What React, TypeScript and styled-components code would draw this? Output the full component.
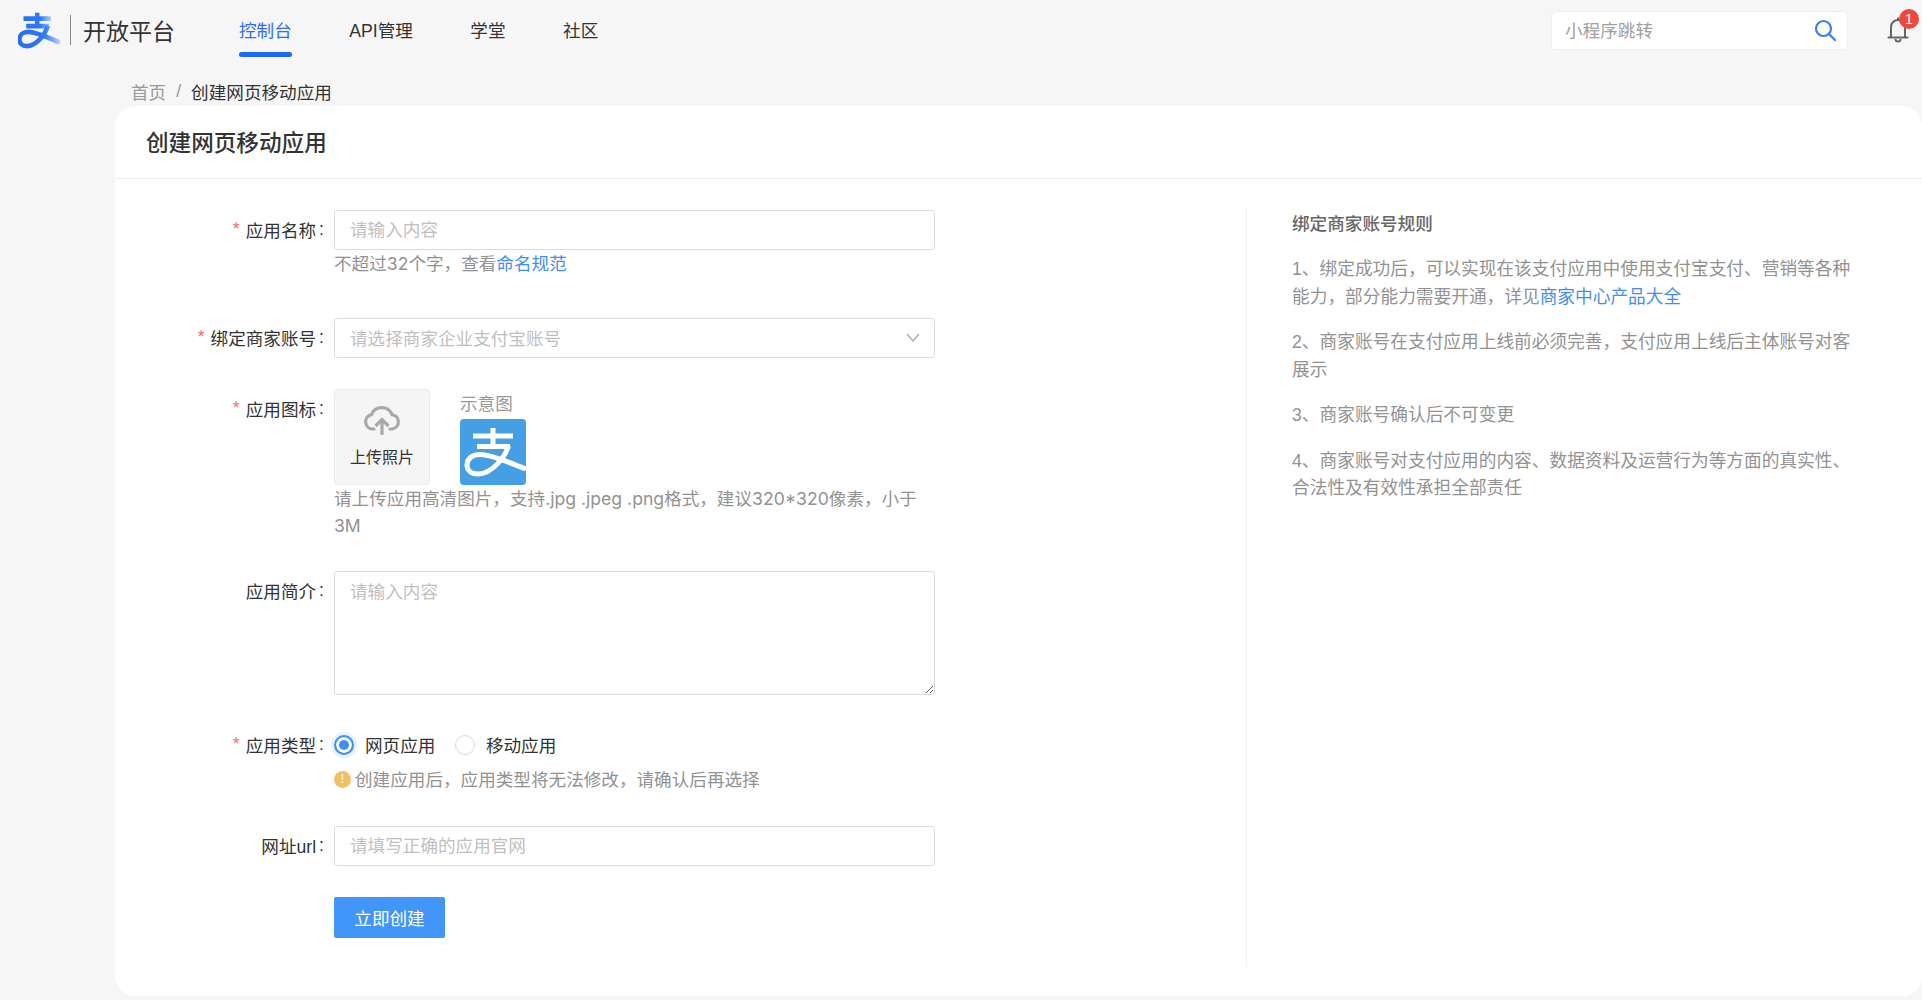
import React from "react";
import styled, { createGlobalStyle } from "styled-components";

const Global = createGlobalStyle`
  html, body { margin: 0; padding: 0; background: #f6f6f7; }
  body { font-family: "Liberation Sans", "Noto Sans CJK SC", sans-serif; font-size: 17.6px; color: #333; }
  * { box-sizing: border-box; }
`;

const Page = styled.div`
  width: 1922px;
  height: 1000px;
  overflow: hidden;
  background: #f6f6f7;
`;
const Header = styled.header`
  display: flex;
  align-items: center;
  height: 60px;
  padding-left: 18px;
`;
const Brand = styled.div`
  display: flex;
  align-items: center;
  width: 221px;
`;
const Divider = styled.span`
  width: 1px;
  height: 30px;
  background: #888;
  margin: 0 12px 0 10px;
`;
const BrandName = styled.span`
  font-size: 23px;
  color: #333;
`;
const Nav = styled.nav`
  display: flex;
  gap: 57.5px;
`;
const NavItem = styled.a<{ $active?: boolean }>`
  position: relative;
  line-height: 28px;
  padding-top: 2px;
  color: ${(p) => (p.$active ? "#2f6df6" : "#333")};
  &::after {
    content: "";
    display: ${(p) => (p.$active ? "block" : "none")};
    position: absolute;
    left: 0;
    right: 0;
    top: 37px;
    height: 5px;
    border-radius: 3px;
    background: #1e66f5;
  }
`;
const HeaderRight = styled.div`
  margin-left: auto;
  display: flex;
  align-items: center;
  padding-right: 12px;
  gap: 38px;
`;
const Search = styled.div`
  display: flex;
  align-items: center;
  width: 297px;
  height: 39px;
  background: #fff;
  border: 1px solid #efefef;
  border-radius: 5px;
  padding: 0 11px 0 13px;
`;
const SearchInput = styled.input`
  flex: 1;
  min-width: 0;
  border: 0;
  padding: 2px 0 0;
  outline: 0;
  background: transparent;
  font: inherit;
  color: #333;
  &::placeholder { color: #a0a0a0; opacity: 1; }
`;
const Bell = styled.div`
  position: relative;
  width: 24px;
  height: 26px;
`;
const Badge = styled.span`
  position: absolute;
  top: -8px;
  left: 13px;
  width: 20px;
  height: 20px;
  border-radius: 50%;
  background: #f0483e;
  color: #fff;
  font-size: 14px;
  line-height: 20px;
  text-align: center;
`;
const Crumbs = styled.div`
  display: flex;
  align-items: center;
  height: 28px;
  margin-top: 18px;
  padding: 0 0 2px 131px;
`;
const CrumbLink = styled.span`
  color: #999;
`;
const CrumbSep = styled.span`
  color: #999;
  margin: 0 10px;
`;
const Card = styled.main`
  margin-left: 115px;
  height: 890px;
  background: #fff;
  border-radius: 20px;
  display: flex;
  flex-direction: column;
`;
const CardHead = styled.div`
  height: 73px;
  display: flex;
  align-items: center;
  padding: 0 0 2px 31px;
  border-bottom: 1px solid #eeeeee;
  font-size: 22.6px;
  font-weight: 500;
  color: #333;
`;
const CardBody = styled.div`
  flex: 1;
  display: flex;
  min-height: 0;
`;
const FormCol = styled.form`
  width: 1131px;
  padding-top: 31px;
`;
const Row = styled.div<{ $mb?: number }>`
  display: grid;
  grid-template-columns: 209px 601px;
  column-gap: 10px;
  margin-bottom: ${(p) => p.$mb ?? 30}px;
`;
const Label = styled.div`
  height: 40px;
  display: flex;
  align-items: center;
  justify-content: flex-end;
  padding-bottom: 2px;
  color: #333;
`;
const Star = styled.span`
  color: #f56c6c;
  margin-right: 6px;
`;
const Colon = styled.span`
  margin-left: 3px;
`;
const Control = styled.div`
  min-width: 0;
`;
const TextInput = styled.input`
  display: block;
  width: 100%;
  height: 40px;
  border: 1px solid #dcdcdc;
  border-radius: 3px;
  padding: 0 15px;
  font: inherit;
  outline: 0;
  background: #fff;
  &::placeholder { color: #bfbfbf; opacity: 1; }
`;
const Select = styled.div`
  display: flex;
  align-items: center;
  justify-content: space-between;
  height: 40px;
  border: 1px solid #dcdcdc;
  border-radius: 3px;
  padding: 0 14px 2px 15px;
  color: #bfbfbf;
`;
const Area = styled.textarea`
  display: block;
  width: 100%;
  height: 124px;
  border: 1px solid #dcdcdc;
  border-radius: 3px;
  padding: 6px 15px;
  font: inherit;
  line-height: 28px;
  outline: 0;
  resize: vertical;
  &::placeholder { color: #bfbfbf; opacity: 1; }
`;
const Help = styled.div`
  font-family: "Inter", "Noto Sans CJK SC", sans-serif;
  color: #929292;
  line-height: 27px;
`;
const Link = styled.a`
  color: #3f8ef5;
`;
const UploadRow = styled.div`
  display: flex;
  gap: 30px;
`;
const UploadBox = styled.div`
  width: 96px;
  height: 96px;
  background: #f5f5f5;
  border: 1px solid #ebebeb;
  border-radius: 4px;
  display: flex;
  flex-direction: column;
  align-items: center;
  padding-top: 15px;
  gap: 11px;
`;
const UploadText = styled.span`
  font-size: 16px;
  line-height: 24px;
  color: #333;
`;
const Sample = styled.div`
  display: flex;
  flex-direction: column;
  color: #999;
  line-height: 28px;
  padding-top: 1px;
`;
const SampleIcon = styled.svg`
  display: block;
  margin-top: 1px;
  border-radius: 4px;
`;
const RadioRow = styled.div`
  display: flex;
  align-items: center;
  height: 40px;
`;
const RadioDot = styled.span<{ $on?: boolean }>`
  width: 20px;
  height: 20px;
  border-radius: 50%;
  background: ${(p) => (p.$on ? "#3f8ef5" : "#fff")};
  border: ${(p) => (p.$on ? "2px solid #3f8ef5" : "1px solid #d9d9d9")};
  box-shadow: ${(p) => (p.$on ? "inset 0 0 0 3px #fff, 0 0 0 3px #e8f1fe" : "none")};
  margin-right: 11px;
  flex: none;
`;
const RadioLabel = styled.span`
  margin: 0 19.5px 2px 0;
  color: #333;
`;
const Warn = styled.div`
  display: flex;
  align-items: center;
  height: 27px;
  color: #929292;
`;
const WarnDot = styled.span`
  width: 17px;
  height: 17px;
  border-radius: 50%;
  background: #efc163;
  color: #fff;
  font-size: 12px;
  line-height: 17px;
  text-align: center;
  margin: 2px 4px 0 0;
  flex: none;
`;
const Submit = styled.button`
  width: 111px;
  height: 41px;
  border: 0;
  border-radius: 2px;
  background: #4295f9;
  color: #fff;
  font: inherit;
`;
const Side = styled.aside`
  width: 617px;
  margin: 29px 0;
  border-left: 1px solid #f2f2f2;
  padding: 3px 0 0 45px;
  color: #929292;
  font-size: 17.7px;
  line-height: 27.5px;
`;
const SideTitle = styled.div`
  font-size: 17.6px;
  font-weight: 500;
  color: #666;
  margin-bottom: 17.5px;
`;
const SidePara = styled.p`
  margin: 0 0 18px;
  width: 568px;
`;

const AliGlyph = ({ color, width }: { color: string; width: number }) => (
  <>
    <path d="M13 17 H53 M33 9 V27 M17 27.5 H50" fill="none" stroke={color} strokeWidth={width} />
    <path
      d="M48.5 27 C45 38 32 55 18 55 C11 55 7 51 7 46 C7 40 12 35.5 20 35.5 C32 35.5 50 44 66 50"
      fill="none"
      stroke={color}
      strokeWidth={width}
    />
  </>
);

const Required = () => <Star>*</Star>;

export default function App() {
  return (
    <Page>
      <Global />
      <Header>
        <Brand>
          <svg width="42" height="37" viewBox="5 8 61 51" preserveAspectRatio="none" aria-hidden="true">
            <defs>
              <linearGradient id="logoFade" x1="0" y1="0" x2="1" y2="0">
                <stop offset="0" stopColor="#2a6ef5" />
                <stop offset="0.62" stopColor="#2f78f7" />
                <stop offset="1" stopColor="#b4d0fd" />
              </linearGradient>
            </defs>
            <AliGlyph color="url(#logoFade)" width={6.5} />
          </svg>
          <Divider />
          <BrandName>开放平台</BrandName>
        </Brand>
        <Nav>
          <NavItem $active>控制台</NavItem>
          <NavItem>API管理</NavItem>
          <NavItem>学堂</NavItem>
          <NavItem>社区</NavItem>
        </Nav>
        <HeaderRight>
          <Search>
            <SearchInput placeholder="小程序跳转" />
            <svg width="22" height="22" viewBox="0 0 22 22" fill="none" stroke="#3b7cf6" strokeWidth="2.2" aria-hidden="true">
              <circle cx="9.5" cy="9.5" r="7.5" />
              <path d="M15 15 L21 21" strokeLinecap="round" />
            </svg>
          </Search>
          <Bell>
            <svg width="24" height="26" viewBox="0 0 24 26" fill="none" stroke="#666" strokeWidth="2" aria-hidden="true">
              <path d="M5 20 V10 A7 7 0 0 1 19 10 V20" />
              <path d="M2.5 20.5 H21.5" strokeLinecap="round" />
              <path d="M12 0.5 V3" />
              <path d="M9.5 22 A2.5 2.5 0 0 0 14.5 22" />
            </svg>
            <Badge>1</Badge>
          </Bell>
        </HeaderRight>
      </Header>
      <Crumbs>
        <CrumbLink>首页</CrumbLink>
        <CrumbSep>/</CrumbSep>
        <span>创建网页移动应用</span>
      </Crumbs>
      <Card>
        <CardHead>创建网页移动应用</CardHead>
        <CardBody>
          <FormCol>
            <Row $mb={41}>
              <Label><Required />应用名称<Colon>:</Colon></Label>
              <Control>
                <TextInput placeholder="请输入内容" />
                <Help>不超过32个字&#xFF0C;查看<Link>命名规范</Link></Help>
              </Control>
            </Row>
            <Row $mb={31}>
              <Label><Required />绑定商家账号<Colon>:</Colon></Label>
              <Control>
                <Select>
                  请选择商家企业支付宝账号
                  <svg width="14" height="9" viewBox="0 0 14 9" fill="none" stroke="#a8a8a8" strokeWidth="1.2" aria-hidden="true">
                    <path d="M1 1 L7 8 L13 1" />
                  </svg>
                </Select>
              </Control>
            </Row>
            <Row $mb={32}>
              <Label><Required />应用图标<Colon>:</Colon></Label>
              <Control>
                <UploadRow>
                  <UploadBox>
                    <svg width="38" height="30" viewBox="0 0 38 30" fill="none" stroke="#a9a9a9" strokeWidth="3.2" aria-hidden="true">
                      <path d="M11 24 H9 A7.3 7.3 0 0 1 8.5 9.6 A11 11 0 0 1 29 9.6 A7.3 7.3 0 0 1 29.5 24 H27" strokeLinecap="round" />
                      <path d="M19 30 V15 M12.5 21 L19 14.5 L25.5 21" />
                    </svg>
                    <UploadText>上传照片</UploadText>
                  </UploadBox>
                  <Sample>
                    示意图
                    <SampleIcon width="66" height="66" viewBox="0 0 66 66" aria-hidden="true">
                      <rect width="66" height="66" fill="#449fe5" />
                      <AliGlyph color="#fff" width={5} />
                    </SampleIcon>
                  </Sample>
                </UploadRow>
                <Help>请上传应用高清图片&#xFF0C;支持.jpg .jpeg .png格式&#xFF0C;建议320*320像素&#xFF0C;小于3M</Help>
              </Control>
            </Row>
            <Row>
              <Label>应用简介<Colon>:</Colon></Label>
              <Control>
                <Area placeholder="请输入内容" />
              </Control>
            </Row>
            <Row $mb={34}>
              <Label><Required />应用类型<Colon>:</Colon></Label>
              <Control>
                <RadioRow>
                  <RadioDot $on />
                  <RadioLabel>网页应用</RadioLabel>
                  <RadioDot />
                  <RadioLabel>移动应用</RadioLabel>
                </RadioRow>
                <Warn><WarnDot>!</WarnDot>创建应用后&#xFF0C;应用类型将无法修改&#xFF0C;请确认后再选择</Warn>
              </Control>
            </Row>
            <Row $mb={31}>
              <Label>网址url<Colon>:</Colon></Label>
              <Control>
                <TextInput placeholder="请填写正确的应用官网" />
              </Control>
            </Row>
            <Row>
              <span />
              <Control>
                <Submit type="button">立即创建</Submit>
              </Control>
            </Row>
          </FormCol>
          <Side>
            <SideTitle>绑定商家账号规则</SideTitle>
            <SidePara>1、绑定成功后&#xFF0C;可以实现在该支付应用中使用支付宝支付、营销等各种能力&#xFF0C;部分能力需要开通&#xFF0C;详见<Link>商家中心产品大全</Link></SidePara>
            <SidePara>2、商家账号在支付应用上线前必须完善&#xFF0C;支付应用上线后主体账号对客展示</SidePara>
            <SidePara>3、商家账号确认后不可变更</SidePara>
            <SidePara>4、商家账号对支付应用的内容、数据资料及运营行为等方面的真实性、合法性及有效性承担全部责任</SidePara>
          </Side>
        </CardBody>
      </Card>
    </Page>
  );
}
